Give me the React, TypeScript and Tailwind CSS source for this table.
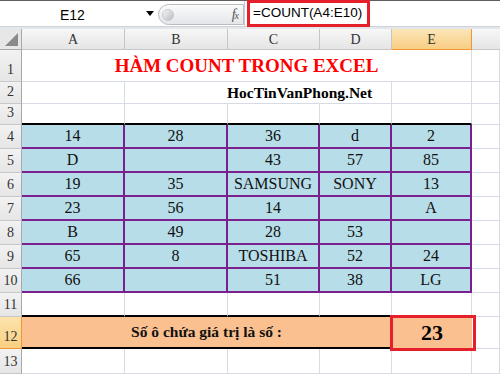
import React from "react"

const cols = ["w-[103px]", "w-[103px]", "w-[92px]", "w-[72px]", "w-[80px]"]
const letters = ["A", "B", "C", "D", "E"]

const data: string[][] = [
  ["14", "28", "36", "d", "2"],
  ["D", "", "43", "57", "85"],
  ["19", "35", "SAMSUNG", "SONY", "13"],
  ["23", "56", "14", "", "A"],
  ["B", "49", "28", "53", ""],
  ["65", "8", "TOSHIBA", "52", "24"],
  ["66", "", "51", "38", "LG"],
]

function RowHead({ n, active }: { n: number; active?: boolean }) {
  return (
    <div
      className={
        "w-[22px] shrink-0 flex items-end justify-center pb-[1px] text-[14px] text-[#333] border-r border-b " +
        (active
          ? "bg-gradient-to-b from-[#fde4ad] to-[#f9cf80] border-r-[#f29536] border-b-[#f29536]"
          : "bg-gradient-to-b from-[#f2f2f2] to-[#e6e6e6] border-r-[#a8a8a8] border-b-[#c8c8c8]")
      }
    >
      {n}
    </div>
  )
}

function Blank({ w, extra = "" }: { w: string; extra?: string }) {
  return <div className={w + " shrink-0 border-r border-b border-[#d6dbe5] bg-white " + extra} />
}

function BlankRow({ n, h }: { n: number; h: string }) {
  return (
    <div className={"flex " + h}>
      <RowHead n={n} />
      {cols.map((w, i) => (
        <Blank key={i} w={w} />
      ))}
      <Blank w="flex-1" />
    </div>
  )
}

export default function App() {
  return (
    <div className="w-[500px] h-[374px] overflow-hidden bg-white font-['Liberation_Serif','Times_New_Roman',serif] select-none">
      {/* formula bar */}
      <div className="h-[26px] flex border-t border-[#5f5f5f] bg-white relative">
        <div className="w-[158px] relative flex items-center">
          <span className="absolute left-[60px] top-[4px] font-['Liberation_Sans',Arial,sans-serif] text-[14px] text-black">E12</span>
          <span className="absolute left-[146px] top-[10px] w-0 h-0 border-l-[4px] border-r-[4px] border-t-[5px] border-l-transparent border-r-transparent border-t-black" />
        </div>
        <div className="w-[86px] mt-[3px] h-[21px] rounded-l-full rounded-r-[3px] border border-[#b9bcc2] bg-gradient-to-b from-[#fbfbfb] to-[#e4e6ea] flex items-center justify-between pl-[3px] pr-[5px]">
          <div className="w-[12px] h-[12px] rounded-full bg-gradient-to-br from-[#f4f5f7] to-[#b9bdc4] border border-[#c7c9cd]" />
          <span className="italic text-[14px] text-[#555] font-['Liberation_Serif',serif] tracking-[-1px]">
            f<span className="text-[10px]">x</span>
          </span>
        </div>
        <div className="flex-1 border-l border-[#c9ccd2] pl-[2px]">
          <div className="mt-[-1px] w-[123px] h-[27px] border-[3px] border-[#e5202a] flex items-center pl-[3px] font-['Liberation_Sans',Arial,sans-serif] text-[13.5px] text-black">
            =COUNT(A4:E10)
          </div>
        </div>
      </div>
      <div className="h-[3px] bg-[#e3e6ea] border-t border-[#cfd3d8]" />

      {/* column headers */}
      <div className="flex h-[21px] text-[14px] text-[#333]">
        <div className="w-[22px] shrink-0 border-r border-b border-[#a8a8a8] bg-[#e7e7e7] relative">
          <span className="absolute right-[3px] bottom-[3px] w-0 h-0 border-l-[13px] border-l-transparent [border-bottom:13px_solid_#8a8a8a]" />
        </div>
        {cols.map((w, i) => (
          <div
            key={i}
            className={
              w +
              " shrink-0 flex items-center justify-center border-r border-b " +
              (i === 4
                ? "bg-gradient-to-b from-[#fbe6b8] to-[#f8cd82] border-[#f29536]"
                : "bg-gradient-to-b from-[#f7f7f7] to-[#e5e5e5] border-[#c6c6c6]")
            }
          >
            {letters[i]}
          </div>
        ))}
        <div className="flex-1 border-b border-[#c6c6c6] bg-gradient-to-b from-[#f7f7f7] to-[#e5e5e5]" />
      </div>

      {/* row 1 */}
      <div className="flex h-[32px]">
        <RowHead n={1} />
        <div className="w-[450px] shrink-0 border-r border-b border-[#d6dbe5] flex items-center justify-center pt-[1px] text-[19px] font-bold text-[#ff0000]">
          HÀM COUNT TRONG EXCEL
        </div>
        <Blank w="flex-1" />
      </div>

      {/* row 2 */}
      <div className="flex h-[22px]">
        <RowHead n={2} />
        <Blank w="w-[103px]" />
        <div className="w-[267px] shrink-0 border-r border-b border-[#d6dbe5] flex items-center pl-[102px] text-[15.5px] font-bold text-black whitespace-nowrap">
          HocTinVanPhong.Net
        </div>
        <Blank w="w-[80px]" />
        <Blank w="flex-1" />
      </div>

      {/* row 3 */}
      <div className="flex h-[21px]">
        <RowHead n={3} />
        {cols.map((w, i) => (
          <div key={i} className={w + " shrink-0 border-r border-[#d6dbe5] border-b-2 border-b-black"} />
        ))}
        <Blank w="flex-1" />
      </div>

      {/* data rows 4-10 */}
      {data.map((row, r) => (
        <div key={r} className="flex h-[24px]">
          <RowHead n={r + 4} />
          {row.map((v, i) => (
            <div
              key={i}
              className={
                cols[i] +
                " shrink-0 bg-[#b7dde8] border-r-2 border-b-2 border-[#7a1f8e] flex items-center justify-center text-[16px] text-[#111] whitespace-nowrap"
              }
            >
              {v}
            </div>
          ))}
          <Blank w="flex-1" />
        </div>
      ))}

      {/* row 11 */}
      <div className="flex h-[24px]">
        <RowHead n={11} />
        {cols.slice(0, 4).map((w, i) => (
          <div key={i} className={w + " shrink-0 border-r border-[#d6dbe5] border-b-2 border-b-black"} />
        ))}
        <Blank w="w-[80px]" />
        <Blank w="flex-1" />
      </div>

      {/* row 12 */}
      <div className="flex h-[32px]">
        <RowHead n={12} active />
        <div className="w-[370px] shrink-0 bg-[#fac090] border-r border-[#d6dbe5] border-b-2 border-b-black flex items-center justify-center text-[15.5px] font-bold text-[#111]">
          Số ô chứa giá trị là số :
        </div>
        <div className="w-[80px] shrink-0 bg-[#fac090] border-b border-[#d6dbe5] relative flex items-center justify-center text-[22px] font-bold text-black">
          23
          <div className="absolute -left-[2px] -right-[4px] -top-[2px] -bottom-[3px] border-[3px] border-[#e5202a]" />
        </div>
        <Blank w="flex-1" />
      </div>

      {/* row 13 */}
      <BlankRow n={13} h="h-[25px]" />
    </div>
  )
}
